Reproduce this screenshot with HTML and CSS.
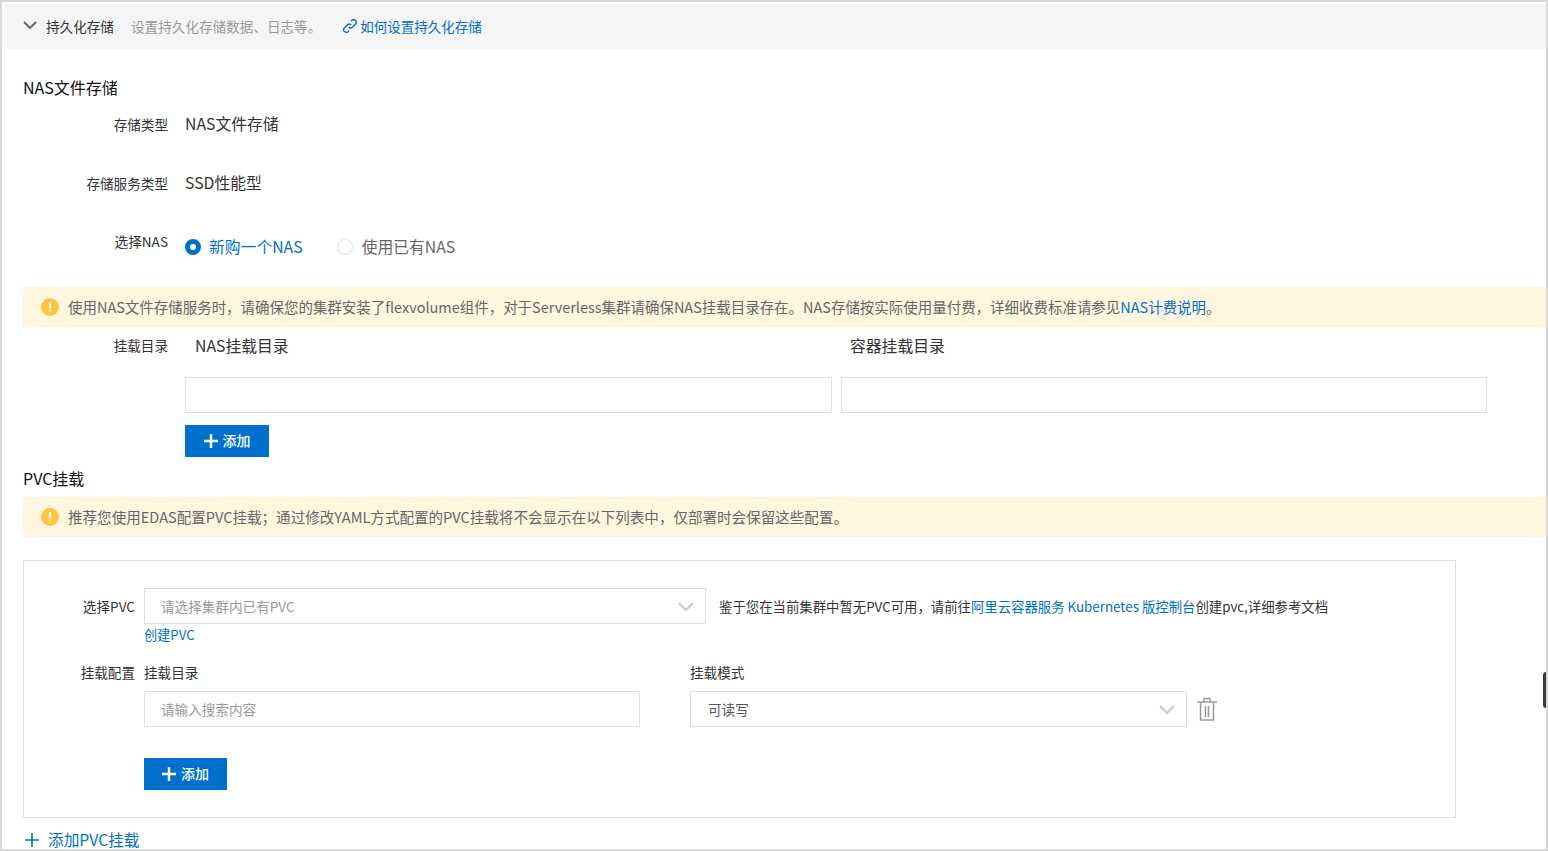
FILE: index.html
```html
<!DOCTYPE html>
<html lang="zh-CN">
<head>
<meta charset="utf-8">
<title>持久化存储</title>
<link rel="stylesheet" href="styles.css">
</head>
<body>
<div class="frame">
  <header class="bar">
    <svg class="chev" width="14" height="9" viewBox="0 0 14 9"><path d="M1 1l6 6 6-6" fill="none" stroke="#666" stroke-width="1.9"/></svg>
    <span class="bar-title">持久化存储</span>
    <span class="bar-desc">设置持久化存储数据、日志等。</span>
    <a class="link bar-link">
      <svg width="16" height="16" viewBox="0 0 16 16" fill="none" stroke="#0070cc" stroke-width="1.4"><path d="M6.9 9.1a2.7 2.7 0 0 0 3.8 0l3-3a2.7 2.7 0 0 0-3.8-3.8L9 3.2"/><path d="M9.1 6.9a2.7 2.7 0 0 0-3.8 0l-3 3a2.7 2.7 0 0 0 3.8 3.8l.9-.9"/></svg>
      <span>如何设置持久化存储</span>
    </a>
  </header>
  <main class="content">
    <h3 class="section nas-title">NAS文件存储</h3>
    <div class="row row-type"><label class="lbl">存储类型</label><span class="val">NAS文件存储</span></div>
    <div class="row row-service"><label class="lbl">存储服务类型</label><span class="val">SSD性能型</span></div>
    <div class="row row-radio">
      <label class="lbl">选择NAS</label>
      <div class="radios">
        <span class="radio on"></span><span class="radio-text sel">新购一个NAS</span>
        <span class="radio off"></span><span class="radio-text">使用已有NAS</span>
      </div>
    </div>
    <div class="alert alert-nas">
      <svg class="warn" width="18" height="18" viewBox="0 0 18 18"><circle cx="9" cy="9" r="9" fill="#ffc440"/><rect x="8" y="4" width="2" height="6.5" fill="#fff"/><rect x="8" y="11.5" width="2" height="2" fill="#fff"/></svg>
      <span>使用NAS文件存储服务时，请确保您的集群安装了flexvolume组件，对于Serverless集群请确保NAS挂载目录存在。NAS存储按实际使用量付费，详细收费标准请参见<a class="link">NAS计费说明</a>。</span>
    </div>
    <div class="row row-mount"><label class="lbl">挂载目录</label>
      <div class="mount-heads"><span class="val">NAS挂载目录</span><span class="val">容器挂载目录</span></div>
    </div>
    <div class="mount-inputs"><div class="input"></div><div class="input"></div></div>
    <button class="btn btn-nas"><svg width="14" height="14" viewBox="0 0 14 14"><path d="M7 0v14M0 7h14" stroke="#fff" stroke-width="2.4"/></svg><span>添加</span></button>
    <h3 class="section pvc-title">PVC挂载</h3>
    <div class="alert alert-pvc">
      <svg class="warn" width="18" height="18" viewBox="0 0 18 18"><circle cx="9" cy="9" r="9" fill="#ffc440"/><rect x="8" y="4" width="2" height="6.5" fill="#fff"/><rect x="8" y="11.5" width="2" height="2" fill="#fff"/></svg>
      <span>推荐您使用EDAS配置PVC挂载；通过修改YAML方式配置的PVC挂载将不会显示在以下列表中，仅部署时会保留这些配置。</span>
    </div>
    <section class="box">
      <div class="pvc-row">
        <label class="lbl2">选择PVC</label>
        <div class="field select pvc-select"><span class="ph">请选择集群内已有PVC</span>
          <svg width="16" height="9" viewBox="0 0 16 9"><path d="M1 1l7 7 7-7" fill="none" stroke="#c4c6cf" stroke-width="1.9"/></svg>
        </div>
        <span class="note">鉴于您在当前集群中暂无PVC可用，请前往<a class="link">阿里云容器服务 Kubernetes 版控制台</a>创建pvc,详细参考文档</span>
      </div>
      <a class="link create">创建PVC</a>
      <div class="cfg-heads">
        <label class="lbl2">挂载配置</label>
        <span class="cfg-a">挂载目录</span>
        <span class="cfg-b">挂载模式</span>
      </div>
      <div class="cfg-fields">
        <div class="field cfg-input"><span class="ph">请输入搜索内容</span></div>
        <div class="field select cfg-select"><span class="selval">可读写</span>
          <svg width="16" height="9" viewBox="0 0 16 9"><path d="M1 1l7 7 7-7" fill="none" stroke="#c4c6cf" stroke-width="1.9"/></svg>
        </div>
        <svg class="trash" width="20" height="24" viewBox="0 0 20 24" fill="none" stroke="#999" stroke-width="1.5"><path d="M0 5h20M7 5V1.5h6V5M3.5 5v18h13V5M8.5 9v11M11.5 9v11"/></svg>
      </div>
      <button class="btn btn-pvc"><svg width="14" height="14" viewBox="0 0 14 14"><path d="M7 0v14M0 7h14" stroke="#fff" stroke-width="2.4"/></svg><span>添加</span></button>
    </section>
    <a class="link add-pvc"><svg width="14" height="14" viewBox="0 0 14 14"><path d="M7 0v14M0 7h14" stroke="#0070cc" stroke-width="1.6"/></svg><span>添加PVC挂载</span></a>
  </main>
  <div class="handle"></div>
</div>
</body>
</html>
```
FILE: styles.css
```css
* { box-sizing: border-box; }
html, body { margin: 0; padding: 0; background: #fff; }
body { font-family: "Noto Sans CJK SC", "Noto Sans", sans-serif; font-size: 13.6px; color: #333; }
.frame { position: relative; height: 851px; overflow: hidden; border: 2px solid #d9d9d9; }
a { text-decoration: none; }
.link { color: #0070cc; }
.bar { display: flex; align-items: center; height: 45px; margin: 2px 0 0 3px; padding: 0 0 2px 18px; background: #f5f5f5; line-height: 20px; }
.chev { margin-right: 9px; }
.bar-title { color: #333; margin-right: 17px; }
.bar-desc { color: #999; margin-right: 21px; }
.bar-link { display: flex; align-items: center; gap: 2px; font-size: 13.5px; }
.content { padding-left: 21px; }
.section { margin: 0; font-size: 16px; font-weight: 400; color: #111; line-height: 22px; }
.nas-title { margin-top: 27px; }
.row { display: flex; }
.lbl { width: 145px; text-align: right; margin-right: 17px; line-height: 20px; flex: none; color: #333; }
.val { font-size: 15.8px; line-height: 22px; color: #333; }
.row-type { margin-top: 15px; height: 22px; }
.row-type .lbl, .row-service .lbl { padding-top: 1px; }
.row-service { margin-top: 37px; height: 22px; }
.row-radio { margin-top: 38px; height: 30px; }
.row-radio .lbl { margin-top: -1px; }
.radios { display: flex; align-items: center; height: 22px; margin-top: 4px; font-size: 15.8px; }
.radio { width: 16px; height: 16px; border-radius: 50%; margin-right: 8px; flex: none; }
.radio.on { background: #fff; border: 5px solid #0070cc; }
.radio.off { border: 1px solid #dcdee3; margin-right: 9px; }
.radio-text { color: #666; line-height: 20px; }
.radio-text.sel { color: #0070cc; margin-right: 34px; }
.alert { display: flex; align-items: center; height: 40px; padding-left: 18px; background: #fff6e0; color: #666; line-height: 20px; font-size: 14.47px; }
.warn { margin-right: 9px; flex: none; }
.alert-nas { margin-top: 25px; }
.row-mount { margin-top: 8px; height: 22px; }
.mount-heads { display: flex; padding-left: 10px; }
.mount-heads .val:first-child { width: 655px; }
.mount-inputs { display: flex; gap: 9px; margin: 20px 0 0 162px; width: 1302px; }
.input { flex: 1; height: 36px; border: 1px solid #dcdee3; }
.btn { display: flex; align-items: center; justify-content: center; gap: 5px; border: 0; padding: 0; height: 32px; background: #0070cc; color: #fff; font: inherit; font-size: 14px; font-weight: 500; line-height: 20px; }
.btn span { margin-top: -2px; }
.btn-nas { width: 84px; margin: 12px 0 0 162px; }
.pvc-title { margin-top: 10px; }
.alert-pvc { margin-top: 8px; font-size: 14.55px; }
.box { width: 1433px; height: 258px; margin-top: 23px; border: 1px solid #dcdee3; padding: 27px 0 0 0; }
.pvc-row { display: flex; align-items: center; height: 36px; }
.lbl2 { width: 111px; text-align: right; margin-right: 9px; flex: none; color: #333; line-height: 20px; }
.field { display: flex; align-items: center; height: 36px; border: 1px solid #dcdee3; padding-left: 16px; flex: none; }
.select { justify-content: space-between; padding-right: 11px; }
.pvc-select { width: 562px; }
.cfg-select { padding-left: 17px; }
.ph { color: #999; }
.selval { color: #555; }
.note { margin-left: 13px; color: #333; white-space: nowrap; font-size: 13.38px; }
.create { display: block; margin: 1px 0 0 120px; line-height: 20px; font-size: 13.2px; }
.cfg-heads { display: flex; margin-top: 17px; line-height: 20px; }
.cfg-a { width: 546px; color: #333; }
.cfg-b { color: #333; }
.cfg-fields { display: flex; align-items: center; margin: 9px 0 0 120px; }
.cfg-input { width: 496px; margin-right: 50px; }
.cfg-select { width: 497px; margin-right: 10px; }
.btn-pvc { width: 83px; margin: 31px 0 0 120px; }
.add-pvc { display: flex; align-items: center; gap: 9px; margin: 11px 0 0 2px; font-size: 15.7px; line-height: 22px; }
.handle { position: absolute; right: 0; top: 670px; width: 3px; height: 36px; background: #3a3a3a; border-radius: 3px 0 0 3px; }
```
